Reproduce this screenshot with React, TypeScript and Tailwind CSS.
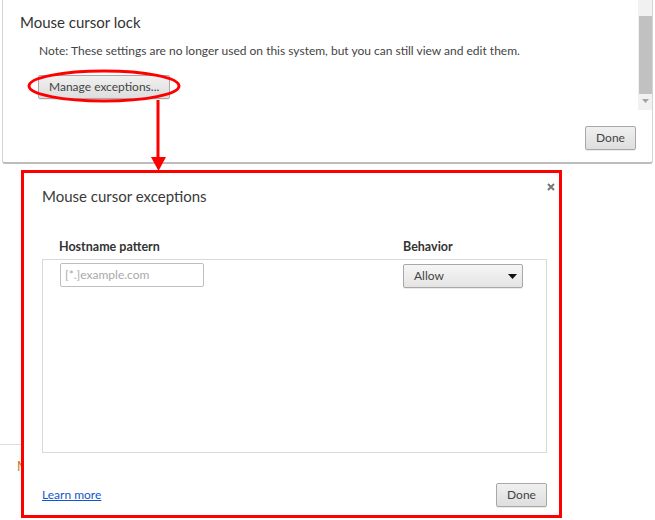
import React from 'react';

const btn =
  "h-[24px] px-[10px] text-[12px] text-[#444] bg-gradient-to-b from-[#f0f0f0] to-[#dedede] border border-[#a8a8a8] rounded-[2px] shadow-[0_1px_0_rgba(0,0,0,0.08)]";

export default function App() {
  return (
    <div className="relative w-[655px] h-[520px] overflow-hidden bg-white font-['Lato','Open_Sans',sans-serif]">
      {/* page behind the dialogs */}
      <div className="absolute left-0 top-[444px] w-[22px] border-t border-[#dedede]" />
      <span className="absolute left-[17px] top-[458px] text-[13px] leading-[16px] text-[#c57b1d]">M</span>

      {/* Mouse cursor lock dialog */}
      <div className="relative z-10 ml-[2px] w-[651px] h-[164px] bg-white border-x border-b-2 border-x-[#d4d4d4] border-b-[#bdbdbd] rounded-b-[3px] flex">
        <div className="flex-1 flex flex-col pl-[17px] pt-[12px]">
          <h2 className="text-[15px] leading-[20px] text-[#333]">Mouse cursor lock</h2>
          <p className="mt-[11px] ml-[19px] text-[12px] leading-[16px] text-[#444]">
            Note: These settings are no longer used on this system, but you can still view and edit them.
          </p>
          <div className="mt-[14px] ml-[18px]">
            <button className={`${btn} h-[22px] px-[10px]`}>Manage exceptions...</button>
          </div>
          <div className="mt-auto mb-[12px] flex justify-end pr-[2px]">
            <button className={`${btn} w-[51px] px-0`}>Done</button>
          </div>
        </div>
        {/* scrollbar */}
        <div className="w-[14px] h-[110px] bg-[#f1f1f1] flex flex-col items-center pt-[16px]">
          <div className="w-[13px] h-[78px] bg-[#c1c1c1]" />
          <svg width="7" height="4" viewBox="0 0 7 4" className="mt-[5px]">
            <path d="M0 0h7L3.5 4z" fill="#a3a3a3" />
          </svg>
        </div>
      </div>

      {/* Mouse cursor exceptions dialog */}
      <div className="relative z-10 mt-[6px] ml-[21px] w-[541px] h-[348px] border-[3px] border-[#ff0000] bg-white flex flex-col">
        <div className="flex justify-between items-start pl-[18px] pr-[4px]">
          <h2 className="mt-[13px] text-[15px] leading-[20px] text-[#3a3a3a]">Mouse cursor exceptions</h2>
          <svg width="8" height="8" viewBox="0 0 8 8" className="mt-[10px]">
            <path d="M1 1l6 6M7 1L1 7" stroke="#777" strokeWidth="2" />
          </svg>
        </div>

        <div className="ml-[18px] mr-[12px] mt-[33px] grid grid-cols-[344px_1fr] pl-[17px] text-[12.5px] leading-[16px] font-bold text-[#333]">
          <span>Hostname pattern</span>
          <span>Behavior</span>
        </div>

        <div className="ml-[18px] mr-[12px] mt-[4px] h-[194px] border border-[#d9d9d9] grid grid-cols-[343px_1fr] content-start pl-[17px] pt-[3px]">
          <div className="w-[144px] h-[24px] border border-[#bfbfbf] rounded-[2px] flex items-center pl-[4px] text-[12px] text-[#a9a9a9]">
            [*.]example.com
          </div>
          <div className="mt-[1px] w-[120px] h-[24px] border border-[#a8a8a8] rounded-[2px] bg-gradient-to-b from-[#f6f6f6] to-[#e4e4e4] shadow-[0_1px_0_rgba(0,0,0,0.08)] flex items-center justify-between pl-[10px] pr-[5px] text-[12px] text-[#444]">
            <span>Allow</span>
            <svg width="9" height="5" viewBox="0 0 9 5">
              <path d="M0 0h9L4.5 5z" fill="#111" />
            </svg>
          </div>
        </div>

        <div className="ml-[18px] mr-[12px] mt-[30px] flex justify-between items-center">
          <a href="#" className="text-[12px] text-[#1155cc] underline">Learn more</a>
          <button className={`${btn} w-[51px] px-0`}>Done</button>
        </div>
      </div>

      {/* annotation: ellipse + arrow */}
      <svg className="absolute left-0 top-0 z-20 pointer-events-none" width="655" height="180" viewBox="0 0 655 180">
        <ellipse cx="104" cy="86" rx="75" ry="15" fill="none" stroke="#ff0000" strokeWidth="3" />
        <line x1="158" y1="100" x2="158" y2="158" stroke="#ff0000" strokeWidth="3" />
        <path d="M151 157h15l-7.5 14z" fill="#ff0000" />
      </svg>
    </div>
  );
}
